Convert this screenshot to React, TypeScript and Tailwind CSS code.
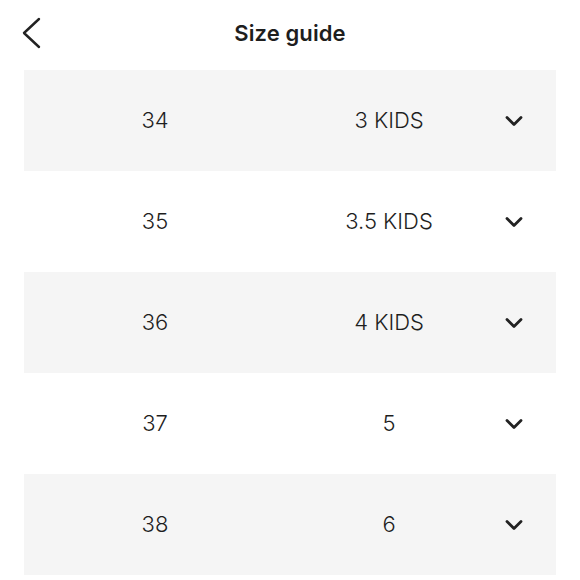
const rows = [
    { eu: "34", us: "3 KIDS" },
    { eu: "35", us: "3.5 KIDS" },
    { eu: "36", us: "4 KIDS" },
    { eu: "37", us: "5" },
    { eu: "38", us: "6" },
];

const Chevron = () => (
    <svg width="20" height="14" viewBox="0 0 20 14" fill="none" stroke="#222" strokeWidth="2.8" strokeLinecap="round" strokeLinejoin="round" className="ml-[12px]">
        <path d="M3 3.5 L10 10.5 L17 3.5" />
    </svg>
);

export default function App() {
    return (
        <div className="w-[580px] h-[580px] bg-white overflow-hidden text-[#1e1e1e]" style={{ fontFamily: "Inter, 'Noto Sans', sans-serif" }}>
            <header className="relative h-[70px] flex items-center justify-center">
                <button className="absolute left-[18px] top-[16px] w-[26px] h-[34px] flex items-center justify-center">
                    <svg width="22" height="32" viewBox="0 0 22 32" fill="none" stroke="#222" strokeWidth="2.4" strokeLinecap="round" strokeLinejoin="round">
                        <path d="M19 2 L4 16 L19 30" />
                    </svg>
                </button>
                <h1 className="text-[22px] font-semibold tracking-[0.1px] -mt-[4px]">Size guide</h1>
            </header>
            <ul className="mx-[24px] w-[532px]">
                {rows.map((r, i) => (
                    <li key={r.eu} className={`h-[101px] flex items-center ${i % 2 === 0 ? "bg-[#f5f5f5]" : "bg-white"}`}>
                        <span className="w-[262px] text-center text-[22px] font-light">{r.eu}</span>
                        <span className="w-[206px] text-center text-[22px] font-light">{r.us}</span>
                        <Chevron />
                    </li>
                ))}
            </ul>
        </div>
    );
}
